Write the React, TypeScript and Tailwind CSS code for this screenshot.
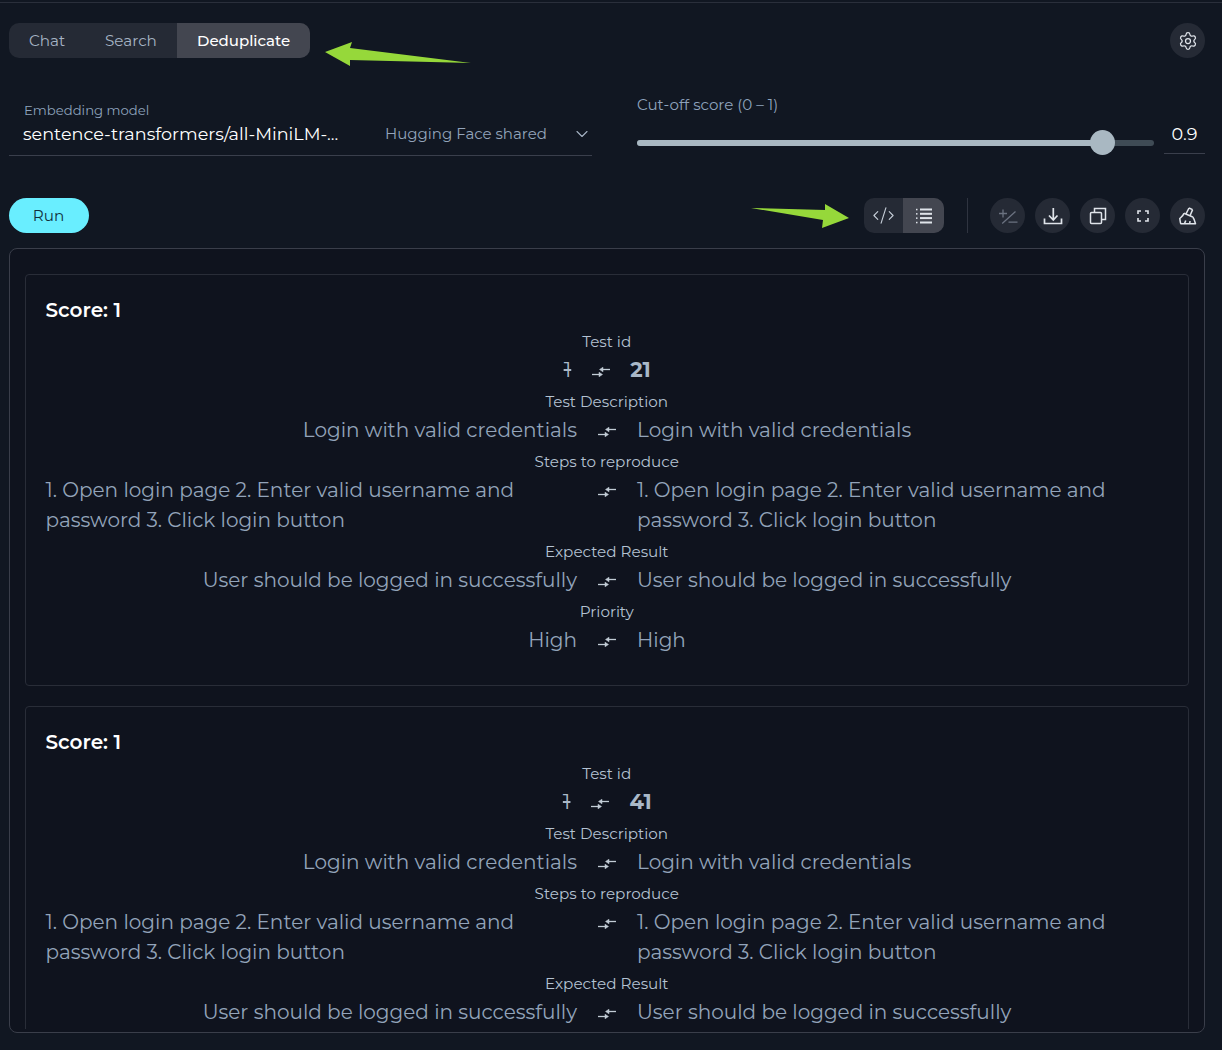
import { ChevronDown, CodeXml, Settings } from "lucide-react";

const font = { fontFamily: "Montserrat, Inter, sans-serif" };

const Swap = () => (
  <svg width="18" height="12" viewBox="0 0 18 12" fill="#c2ccd6" stroke="#c2ccd6" strokeWidth="1.300">
    <path d="M0 8.500h7" />
    <path d="M7 6.200 10.500 8.500 7 10.800z" strokeWidth="0.500" />
    <path d="M11 3.500h7" />
    <path d="M11 1.200 7.500 3.500 11 5.800z" strokeWidth="0.500" />
  </svg>
);

const Download = () => (
  <svg width="20" height="20" viewBox="0 0 20 20" fill="none" stroke="#e0e4ea" strokeWidth="1.700">
    <path d="M10.300 2v12M6 9.500l4.300 4.500 4.200-4.500" />
    <path d="M1.500 12.500v5h17v-5" />
  </svg>
);

const Copy = () => (
  <svg width="18" height="18" viewBox="0 0 18 18" fill="none" stroke="#e0e4ea" strokeWidth="1.500">
    <rect x="1.500" y="5.500" width="11" height="11" rx="1" />
    <path d="M5.500 5.500V1.500h11v11h-4" />
  </svg>
);

const Corners = () => (
  <svg width="12" height="12" viewBox="0 0 12 12" fill="none" stroke="#e0e4ea" strokeWidth="1.600">
    <path d="M1 4V1h3M8 1h3v3M11 8v3H8M4 11H1V8" />
  </svg>
);

const PlusMinus = () => (
  <svg width="20" height="20" viewBox="0 0 20 20" fill="none" stroke="#6b7280" strokeWidth="1.300">
    <path d="M1 7.500h8M5 3.500v8M17.500 5.500 4.200 17.500M10.500 16.200h9" />
  </svg>
);

const ListIcon = () => (
  <svg width="16" height="16" viewBox="0 0 16 16" fill="#e0e4ea">
    <rect x="4" y="0.500" width="12" height="2" />
    <rect x="4" y="4.800" width="12" height="2" />
    <rect x="4" y="9.100" width="12" height="2" />
    <rect x="4" y="13.500" width="12" height="2" />
    <rect x="0" y="0.800" width="1.500" height="1.500" />
    <rect x="0" y="5.100" width="1.500" height="1.500" />
    <rect x="0" y="9.400" width="1.500" height="1.500" />
    <rect x="0" y="13.800" width="1.500" height="1.500" />
  </svg>
);

const Broom = () => (
  <svg width="18" height="18" viewBox="0 0 18 18" fill="none" stroke="#e0e4ea" strokeWidth="1.500" strokeLinejoin="round">
    <path d="M10 1 7 6.800M13.600 2.600 11 8.800M10 1l3.600 1.600" />
    <path d="M5 6.200 13.800 10" />
    <path d="M5 6.200C4.200 9 1.500 10.500.8 11.500c.4 2.300.4 3.900 1 5.200h14.700c-.5-2-1.200-4.600-2.700-6.700" />
    <path d="M5.300 16.700c.6-1 1.100-2 1.400-3.200M10.500 16.700c.3-.8.500-1.600.5-2.600" />
  </svg>
);

const Label = ({ children }: { children: React.ReactNode }) => (
  <div className="h-[30px] text-center text-[15.200px] leading-[34px] text-[#b4c2d2]">{children}</div>
);

const Compare = ({ left, right }: { left: string; right: string }) => (
  <div className="grid grid-cols-[531.500px_60px_1fr] text-[20px] leading-[30px] text-[#93a4ba]">
    <div className="flex justify-end">
      <div>{left}</div>
    </div>
    <div className="flex h-[30px] items-center justify-center pt-1">
      <Swap />
    </div>
    <div>{right}</div>
  </div>
);

const Card = ({ id }: { id: string }) => {
  const steps = "1. Open login page 2. Enter valid username and password 3. Click login button";
  const expected = "User should be logged in successfully";
  return (
    <div className="rounded border border-[#292d38] pt-5 pr-5 pb-[30px] pl-[19.500px]">
      <div className="h-[30px] text-[20px] leading-[30px] font-semibold text-white">Score: 1</div>
      <Label>Test id</Label>
      <div className="flex h-[30px] items-center justify-center gap-5 pl-px text-[21px] font-bold text-[#a9b8c8]">
        <span className="font-normal line-through">1</span>
        <span className="ml-px pt-1">
          <Swap />
        </span>
        <span>{id}</span>
      </div>
      <Label>Test Description</Label>
      <Compare left="Login with valid credentials" right="Login with valid credentials" />
      <Label>Steps to reproduce</Label>
      <Compare left={steps} right={steps} />
      <Label>Expected Result</Label>
      <Compare left={expected} right={expected} />
      <Label>Priority</Label>
      <Compare left="High" right="High" />
    </div>
  );
};

const Round = ({ children }: { children: React.ReactNode }) => (
  <button className="flex h-[35px] w-[35px] items-center justify-center rounded-full bg-[#252a35]">{children}</button>
);

export default function App() {
  return (
    <div className="relative h-[1050px] w-[1222px] overflow-hidden bg-[#111722] pt-[2px]" style={font}>
      <div className="border-t border-[#2a2f3b] pt-5 pr-[17px] pl-[9px]">
        <div className="flex h-[35px] items-center justify-between">
          <div className="flex h-[35px] overflow-hidden rounded-[10px] bg-[#252a35] text-[15.200px] leading-[35px] text-[#a6b4c4]">
            <div className="w-[76px] pl-5">Chat</div>
            <div className="w-[92px] pl-5">Search</div>
            <div className="w-[133px] bg-[#434650] pl-5 text-[15px] font-medium text-white">Deduplicate</div>
          </div>
          <Round>
            <Settings className="h-5 w-5 text-[#e0e4ea]" strokeWidth={1.5} />
          </Round>
        </div>

        <div className="mt-[35px] flex gap-[45px]">
          <div className="h-[63px] w-[583px] border-b border-[#3a3f4c]">
            <div className="pt-[7px] pl-[15px] text-[13.200px] leading-5 text-[#8ea3bd]">Embedding model</div>
            <div className="flex items-center pl-[14px]">
              <div className="w-[362px] shrink-0 pt-px text-[17.600px] leading-[26px] text-white">sentence-transformers/all-MiniLM-...</div>
              <div className="w-[187px] shrink-0 pt-px text-[15px] leading-[26px] text-[#93a4ba]">Hugging Face shared</div>
              <ChevronDown className="h-5 w-5 shrink-0 text-[#a6b4c4]" strokeWidth={1.3} />
            </div>
          </div>
          <div className="flex-1">
            <div className="pt-[2px] text-[15.100px] leading-5 text-[#8ea3bd]">Cut-off score (0 – 1)</div>
            <div className="flex gap-[10px]">
              <div className="relative mt-[15px] h-[25px] w-[517px]">
                <div className="absolute top-[10px] left-0 h-[6px] w-full rounded-full bg-[#3f4b55]" />
                <div className="absolute top-[10px] left-0 h-[6px] w-[465px] rounded-full bg-[#a9b8c2]" />
                <div className="absolute top-0 left-[452.500px] h-[25px] w-[25px] rounded-full bg-[#a9b8c2]" />
              </div>
              <div className="h-[39px] w-[41px] border-b border-[#3a3f4c] text-center text-[17.600px] leading-[38px] text-white">0.9</div>
            </div>
          </div>
        </div>

        <div className="mt-[42px] flex items-center justify-between">
          <button className="h-[35px] w-20 rounded-full bg-[#69eeff] pt-px pr-px text-[15.200px] text-[#10303c]">Run</button>
          <div className="flex items-center">
            <div className="flex h-[35px] w-20 overflow-hidden rounded-[10px] bg-[#252a35]">
              <div className="flex w-[39px] items-center justify-center">
                <CodeXml className="h-[23px] w-[23px] text-[#c4ccd6]" strokeWidth={1.2} />
              </div>
              <div className="flex flex-1 items-center justify-center bg-[#434650]">
                <ListIcon />
              </div>
            </div>
            <div className="mr-[22px] ml-[23px] h-[35px] w-px bg-[#2f3440]" />
            <div className="flex gap-[10px]">
              <Round>
                <PlusMinus />
              </Round>
              <Round>
                <Download />
              </Round>
              <Round>
                <Copy />
              </Round>
              <Round>
                <Corners />
              </Round>
              <Round>
                <Broom />
              </Round>
            </div>
          </div>
        </div>

        <div className="mt-[15px] h-[785px] overflow-hidden rounded-lg border border-[#3a3e4a] bg-[#0f131e] px-[15px] pt-[25px]">
          <div className="flex h-[755px] flex-col gap-5 overflow-hidden">
            <Card id="21" />
            <Card id="41" />
          </div>
        </div>
      </div>

      {/* annotation arrows drawn over the screenshot */}
      <svg className="absolute top-0 left-0" width="1222" height="260" fill="#96d83a">
        <polygon points="325,52 352,42 350,48 471,63 350,60 350,66" />
        <polygon points="751,208 825,210 825,204 849,218 822,228 823,220" />
      </svg>
    </div>
  );
}
